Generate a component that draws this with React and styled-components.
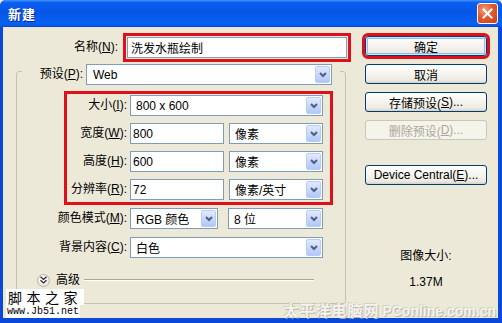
import React from 'react';
import styled, { createGlobalStyle } from 'styled-components';

const GlobalStyle = createGlobalStyle`
  html, body { margin: 0; padding: 0; }
  body {
    width: 502px; height: 323px; overflow: hidden; background: #ECE9D8;
    font-family: "Liberation Sans", "Noto Sans CJK SC", sans-serif;
    font-size: 12px; color: #000;
  }
  * { box-sizing: border-box; }
`;

const Frame = styled.div`
  position: relative;
  width: 502px;
  height: 323px;
  display: flex;
  flex-direction: column;
  background: #0A48DA;
  border-radius: 6px 6px 0 0;
  overflow: hidden;
`;

const TitleBar = styled.div`
  flex: none;
  height: 27px;
  display: flex;
  align-items: center;
  justify-content: space-between;
  padding: 0 4px 0 8px;
  background: linear-gradient(to bottom, #3D95FF 0%, #0A5EF0 10%, #0556E6 45%, #0761F2 85%, #0A5BE8 94%, #0545CF 100%);
`;

const TitleText = styled.span`
  color: #fff;
  font-family: "Noto Sans CJK SC", sans-serif;
  font-weight: 700;
  font-size: 13px;
  letter-spacing: 1px;
  text-shadow: 1px 1px 0 #0A2A8C;
`;

const CloseButton = styled.div`
  width: 21px;
  height: 21px;
  border: 1px solid #fff;
  border-radius: 3px;
  background: radial-gradient(circle at 35% 30%, #F3A182 0%, #E2582E 45%, #C9401A 100%);
  display: flex;
  align-items: center;
  justify-content: center;
`;

const Body = styled.div`
  flex: 1;
  display: flex;
  margin: 0 4px 5px 3px;
  padding-top: 9px;
  background: #ECE9D8;
`;

const LeftPane = styled.div`
  width: 343px;
  display: flex;
  flex-direction: column;
`;

const RightPane = styled.div`
  flex: 1;
  display: flex;
  flex-direction: column;
  padding-left: 19px;
`;

const NameRow = styled.div`
  display: flex;
  align-items: center;
  margin-top: 1px;
  height: 21px;
`;

const Label = styled.span`
  flex: none;
  width: ${p => p.$w}px;
  margin-right: ${p => p.$gap ?? 3}px;
  text-align: right;
  white-space: nowrap;
  line-height: 21px;
`;

const TextField = styled.div`
  flex: none;
  width: ${p => p.$w}px;
  height: 21px;
  background: #fff;
  border: 1px solid #7F9DB9;
  display: flex;
  align-items: center;
  padding-left: ${p => p.$pad ?? 2}px;
  white-space: nowrap;
  outline: ${p => (p.$mark ? '3px solid #E0101A' : 'none')};
  outline-offset: 1px;
`;

const Combo = styled.div`
  flex: none;
  width: ${p => p.$w}px;
  height: ${p => p.$h ?? 21}px;
  display: flex;
  align-items: stretch;
  background: #fff;
  border: 1px solid #7F9DB9;
  padding: 1px;
`;

const ComboText = styled.span`
  flex: 1;
  display: flex;
  align-items: center;
  padding-left: ${p => p.$pad ?? 4}px;
  white-space: nowrap;
`;

const DropButton = styled.span`
  flex: none;
  width: 15px;
  border: 1px solid #B9CCF6;
  border-radius: 2px;
  background: linear-gradient(to bottom, #E1EAFE 0%, #C7D7FA 55%, #B2C7F6 100%);
  display: flex;
  align-items: center;
  justify-content: center;
`;

const GroupBox = styled.fieldset`
  margin: 0 0 0 13px;
  width: 330px;
  min-width: 0;
  padding: 0 0 15px 0;
  border: 1px solid #C5C2B2;
  border-radius: 3px;
`;

const Legend = styled.legend`
  margin-left: 5px;
  padding: 6px 8px 0 0;
  display: flex;
  align-items: center;
`;

const SizeBox = styled.div`
  margin: 6px 0 0 47px;
  width: 269px;
  border: 3px solid #E0101A;
  padding: 1px 7px 2px 0;
  display: flex;
  flex-direction: column;
  gap: 7px;
`;

const FieldRow = styled.div`
  display: flex;
  align-items: center;
  margin-top: ${p => p.$top ?? 0}px;
`;

const Pair = styled.div`
  display: flex;
  gap: ${p => p.$gap ?? 5}px;
`;

const AdvancedRow = styled.div`
  display: flex;
  align-items: center;
  height: 14px;
  margin-top: 16px;
  padding: 0 31px 2px 20px;
  gap: 6px;
`;

const AdvIcon = styled.span`
  flex: none;
  width: 13px;
  height: 13px;
  border-radius: 50%;
  border: 1px solid #B5B2A2;
  background: radial-gradient(circle at 40% 35%, #FFFFFF, #E4E2D8);
  display: flex;
  align-items: center;
  justify-content: center;
`;

const AdvText = styled.span`
  flex: none;
  line-height: 14px;
`;

const AdvLine = styled.span`
  flex: 1;
  height: 2px;
  border-top: 1px solid #ACA899;
  border-bottom: 1px solid #FFFFFF;
  margin-left: -2px;
`;

const Button = styled.div`
  width: 122px;
  height: 20px;
  margin-top: ${p => p.$top ?? 0}px;
  border: 1px solid ${p => (p.$disabled ? '#C9C7BA' : '#003C74')};
  border-radius: 3px;
  background: ${p =>
    p.$disabled
      ? '#F5F4EA'
      : 'linear-gradient(to bottom, #FFFFFF 0%, #F6F5F0 45%, #ECEAE2 85%, #D6D0C5 100%)'};
  color: ${p => (p.$disabled ? '#ACA899' : '#000')};
  box-shadow: ${p => (p.$default ? 'inset 0 0 0 1px #CEE7FF, inset 0 0 0 2px #98B8EA' : 'none')};
  display: flex;
  align-items: center;
  justify-content: center;
  white-space: nowrap;
  outline: ${p => (p.$mark ? '3px solid #E0101A' : 'none')};
`;

const InfoText = styled.div`
  width: 122px;
  text-align: center;
  line-height: 16px;
  margin-top: ${p => p.$top}px;
`;

const JbMark = styled.div`
  position: absolute;
  left: 6px;
  top: 289px;
  display: flex;
  flex-direction: column;
  align-items: flex-start;
`;

const JbTitle = styled.span`
  background: #fff;
  padding: 0 2px;
  font-family: "Noto Sans CJK SC", sans-serif;
  font-size: 14px;
  line-height: 16px;
  letter-spacing: 4.5px;
`;

const JbUrl = styled.span`
  background: #fff;
  padding: 0 1px;
  font-family: "Liberation Mono", monospace;
  font-size: 10px;
  line-height: 13px;
`;

const PcMark = styled.div`
  position: absolute;
  right: 6px;
  bottom: 5px;
  display: flex;
  align-items: baseline;
  gap: 3px;
  color: #F4F3EE;
  font-weight: 700;
  line-height: 14px;
  text-shadow: 1px 1px 0 #B9B6A8, -1px -1px 0 #D5D2C4;
`;

const PcCn = styled.span`
  font-family: "Noto Sans CJK SC", sans-serif;
  font-size: 15px;
  letter-spacing: 1px;
`;

const PcEn = styled.span`
  font-family: "Liberation Sans", sans-serif;
  font-size: 14px;
`;

const Chevron = () => (
  <svg width="8" height="6" viewBox="0 0 8 6">
    <path d="M1 1 L4 4 L7 1" stroke="#4D6185" strokeWidth="2" fill="none" />
  </svg>
);

const Select = ({ w, text, pad }) => (
  <Combo $w={w}>
    <ComboText $pad={pad}>{text}</ComboText>
    <DropButton>
      <Chevron />
    </DropButton>
  </Combo>
);

const Mn = ({ k }) => <u>{k}</u>;

export default function App() {
  return (
    <>
      <GlobalStyle />
      <Frame>
        <TitleBar>
          <TitleText>新建</TitleText>
          <CloseButton>
            <svg width="11" height="11" viewBox="0 0 11 11">
              <path d="M1.5 1.5 L9.5 9.5 M9.5 1.5 L1.5 9.5" stroke="#fff" strokeWidth="2" strokeLinecap="square" />
            </svg>
          </CloseButton>
        </TitleBar>
        <Body>
          <LeftPane>
            <NameRow>
              <Label $w={115} $gap={9}>名称(<Mn k="N" />):</Label>
              <TextField $w={220} $pad={3} $mark>洗发水瓶绘制</TextField>
            </NameRow>
            <GroupBox>
              <Legend>
                <Label $w={61}>预设(<Mn k="P" />):</Label>
                <Select w={246} text="Web" pad={5} />
              </Legend>
              <SizeBox>
                <FieldRow>
                  <Label $w={60}>大小(<Mn k="I" />):</Label>
                  <Select w={193} text="800 x 600" />
                </FieldRow>
                <FieldRow>
                  <Label $w={60}>宽度(<Mn k="W" />):</Label>
                  <Pair>
                    <TextField $w={94}>800</TextField>
                    <Select w={94} text="像素" />
                  </Pair>
                </FieldRow>
                <FieldRow>
                  <Label $w={60}>高度(<Mn k="H" />):</Label>
                  <Pair>
                    <TextField $w={94}>600</TextField>
                    <Select w={94} text="像素" />
                  </Pair>
                </FieldRow>
                <FieldRow>
                  <Label $w={60}>分辨率(<Mn k="R" />):</Label>
                  <Pair>
                    <TextField $w={94}>72</TextField>
                    <Select w={94} text="像素/英寸" />
                  </Pair>
                </FieldRow>
              </SizeBox>
              <FieldRow $top={3}>
                <Label $w={110}>颜色模式(<Mn k="M" />):</Label>
                <Pair $gap={10}>
                  <Select w={88} text="RGB 颜色" />
                  <Select w={95} text="8 位" />
                </Pair>
              </FieldRow>
              <FieldRow $top={8}>
                <Label $w={110}>背景内容(<Mn k="C" />):</Label>
                <Select w={193} text="白色" />
              </FieldRow>
              <AdvancedRow>
                <AdvIcon>
                  <svg width="7" height="8" viewBox="0 0 7 8">
                    <path d="M0.5 0.8 L3.5 3.5 L6.5 0.8 M0.5 4.3 L3.5 7 L6.5 4.3" stroke="#2B2B2B" strokeWidth="1.3" fill="none" />
                  </svg>
                </AdvIcon>
                <AdvText>高级</AdvText>
                <AdvLine />
              </AdvancedRow>
            </GroupBox>
          </LeftPane>
          <RightPane>
            <Button $default $mark>确定</Button>
            <Button $top={8}>取消</Button>
            <Button $top={8}>存储预设(<Mn k="S" />)...</Button>
            <Button $top={8} $disabled>删除预设(<Mn k="D" />)...</Button>
            <Button $top={25}>Device Central(<Mn k="E" />)...</Button>
            <InfoText $top={63}>图像大小:</InfoText>
            <InfoText $top={10}>1.37M</InfoText>
          </RightPane>
        </Body>
        <JbMark>
          <JbTitle>脚本之家</JbTitle>
          <JbUrl>www.Jb51.net</JbUrl>
        </JbMark>
        <PcMark>
          <PcCn>太平洋电脑网</PcCn>
          <PcEn>PConline.com.cn</PcEn>
        </PcMark>
      </Frame>
    </>
  );
}
